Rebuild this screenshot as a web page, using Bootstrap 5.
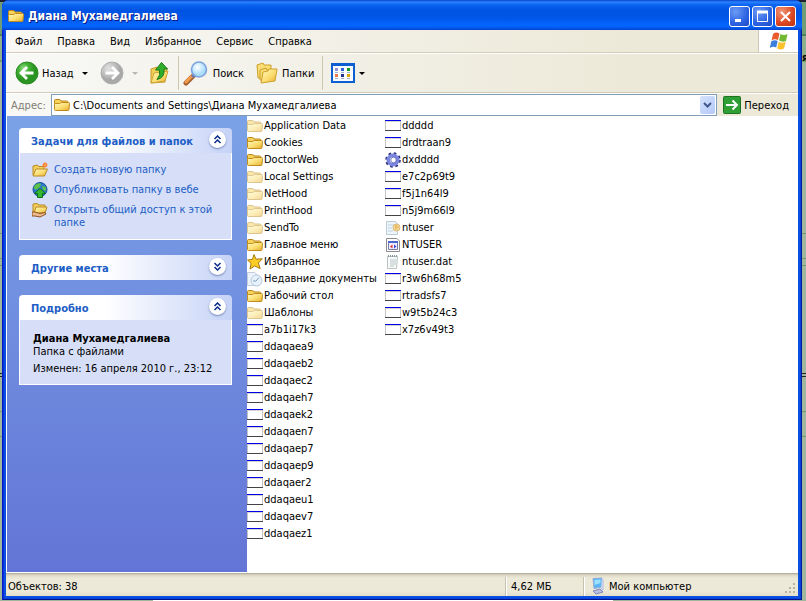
<!DOCTYPE html>
<html lang="ru">
<head>
<meta charset="utf-8">
<meta name="viewport" content="width=device-width, initial-scale=1">
<title>Диана Мухамедгалиева</title>
<link href="https://cdn.jsdelivr.net/npm/bootstrap@5.3.0/dist/css/bootstrap.min.css" rel="stylesheet">
<style>
:root{--face:#ece9d8;--ink:#000;--task:#215dc6}
body{font:11px/13px "DejaVu Sans Condensed","DejaVu Sans",sans-serif;color:var(--ink);
 background:linear-gradient(90deg,transparent 19%,#fff 19% 76%,transparent 76%) bottom/100% 1px no-repeat,
 linear-gradient(transparent 233px,#6f9d70 233px 234px,transparent 234px 258px,#6f9d70 258px 259px,transparent 259px 265px,#6f9d70 265px 266px,transparent 266px 373px,#222 373px 374px,transparent 374px 376px,#222 376px 377px,transparent 377px 411px,#6f9d70 411px 412px,transparent 412px 436px,#6f9d70 436px 437px,transparent 437px),
 linear-gradient(#1c2030 0 2px,#6f9d78 2px 34px,#4c8058 34px 36px,#8fb08c 36px 60px,#6fa06c 60px 62px,#9fb79c 62px)}
button,input,a{font:inherit;color:inherit}
a{text-decoration:none}
a:hover{text-decoration:underline}
button{background:none;border:0;padding:0}
svg{flex:none;display:block}
.desktop{min-height:100vh;padding:0 4px 1px 2px;overflow:hidden}
.edge-text{right:-4px;top:51px;width:4px;height:13px;overflow:hidden;font-weight:700}
.xp-window{background:#0a4fe0;padding:0 4px 4px;border-radius:7px 7px 0 0;
 box-shadow:inset 1px 0 #0019cf,inset -1px 0 #001a9e,inset 0 -1px #00138c,inset 2px 0 #0831d9,inset -2px 0 #0441d8,inset 0 -2px #0441d8}
.title-strip{height:30px;margin:0 -4px;padding:2px 6px 0;border-radius:7px 7px 0 0;color:#fff;
 background:linear-gradient(#0842c8 0,#2b83ff 2px,#0a62f0 5px,#0054e3 10px,#0056e8 18px,#0366ff 25px,#0560f5 27px,#0043cf 30px)}
.title-strip h1{font:bold 12px/16px "DejaVu Sans Condensed","DejaVu Sans",sans-serif;text-shadow:1px 1px #0a1883}
.cap-btns{gap:2px}
.cap-btn{width:21px;height:21px;border:1px solid #fff;border-radius:3px;display:grid;place-items:center;background:radial-gradient(circle at 30% 25%,#6c9bf5,#2c62e2 60%,#1c4bc4)}
.cap-close{background:radial-gradient(circle at 30% 25%,#f0977a,#dd4a24 55%,#b8320e)}
.bars{background:linear-gradient(90deg,#f8f8f6,var(--face) 80%)}
.menu-row{height:23px;border-bottom:1px solid #d0ccb8}
.menu-row nav{padding-left:9px;gap:15px}
.flag-box{width:40px;background:#fff;border-left:1px solid #cdc9b6}
.tool-row{height:40px;border-top:1px solid #fff;border-bottom:1px solid #d0ccb8;padding-left:9px}
.back-btn{gap:3px}
.up-btn{margin:0 6px 0 10px}
.tool-sep{width:1px;height:34px;background:#cbc7b0}
.caret{width:0;height:0;border:3px solid transparent;border-top-color:#000;border-bottom:0}
.addr-row{height:23px;padding:0 9px 0 5px;border-top:1px solid #fff}
.addr-row label{color:#7f7c73;width:40px}
.addr-box{height:22px;border:1px solid #7f9db9;background:#fff;padding:0 1px 0 2px;margin-right:6px}
.addr-box input{border:0;outline:0;padding:0;min-width:0;margin-left:3px;background:none}
.drop-btn{width:15px;height:18px;border-radius:2px;background:linear-gradient(135deg,#d5e1fd,#b4c9f8);display:grid;place-items:center}
.main-area{border:solid #fff;border-width:0 0 1px 1px;background:#fff;min-height:457px}
.task-pane{width:240px;flex:none;padding:12px 15px 12px 12px;gap:15px;background:linear-gradient(#7ba2e7,#6375d6)}
.task-head{height:25px;padding:0 6px 0 12px;border-radius:4px 4px 0 0;color:var(--task);background:linear-gradient(90deg,#fff 40%,#c6d3f7)}
.task-head h2{font:bold 11px/13px "DejaVu Sans Condensed","DejaVu Sans",sans-serif;margin:2px 0 0}
.round-btn{width:17px;height:17px;margin-bottom:2px;border-radius:50%;background:#fff;display:grid;place-items:center;box-shadow:0 1px 2px #7185b9}
.task-body{border:1px solid #fff;border-top:0;background:#d6dff7;padding:9px 8px 10px 12px}
.task-links{gap:4px;color:var(--task)}
.task-links a{gap:6px}
.task-links span{padding-top:1px}
.info-body{min-height:65px;padding-left:13px;white-space:nowrap}
.files{padding-top:1px;width:138px}
.files a{height:17px;gap:1px;white-space:nowrap}
.ghost{opacity:.5}
.status-row{height:23px;background:linear-gradient(#a8a594 0,#dcd8c4 2px,var(--face) 5px,#ece9d8 18px,#e2decb);padding:3px 0 0 2px}
.status-cell{border-left:1px solid #fff;box-shadow:-1px 0 #c5c2b0;height:19px}
.size-cell{width:78px}
.zone-cell{width:200px;gap:2px}
</style>
</head>
<body>
<svg width="0" height="0" class="position-absolute" aria-hidden="true">
<defs>
<linearGradient id="gold" x1="0" y1="0" x2="1" y2="1"><stop stop-color="#fffabf"/><stop offset=".55" stop-color="#fbdd70"/><stop offset="1" stop-color="#e5aa2c"/></linearGradient>
<radialGradient id="green" cx=".35" cy=".3"><stop stop-color="#9be08a"/><stop offset=".5" stop-color="#43b036"/><stop offset="1" stop-color="#2a9422"/></radialGradient>
<radialGradient id="grey" cx=".35" cy=".3"><stop stop-color="#e4e4e4"/><stop offset=".6" stop-color="#c2c2c2"/><stop offset="1" stop-color="#a8a8a8"/></radialGradient>
<radialGradient id="lens" cx=".4" cy=".35"><stop stop-color="#fff"/><stop offset="1" stop-color="#a8dcfa"/></radialGradient>
<symbol id="folder" viewBox="0 0 16 16"><path d="M.5 12V3.500Q.5 2.500 1.500 2.500H5.500Q6.500 2.500 7 4H12.500Q14 4 14 5.500V12Z" fill="#f6d25a" stroke="#b98418"/><path d="M1.500 13.500Q.5 13.500.5 12.500V7.500Q.5 6.500 1.500 6.500H5.500L7.500 5.500H14.500Q15.500 5.500 15.500 6.500L15 12.500Q15 13.500 14 13.500Z" fill="url(#gold)" stroke="#c08c20"/></symbol>
<symbol id="app" viewBox="0 0 16 16"><path d="M.5 3V12M15.500 3V12" stroke="#c4c4c4"/><path d="M1 3.500H15" stroke="#d4d4d4"/><path d="M0 2H16V3H0Z" fill="#0000e8"/><path d="M0 12H16V13H0Z" fill="#444"/></symbol>
<symbol id="up2" viewBox="0 0 9 9"><path d="M1.500 4L4.500 1L7.500 4M1.500 8L4.500 5L7.500 8" fill="none" stroke="#0a2c8c" stroke-width="1.500"/></symbol>
<symbol id="down2" viewBox="0 0 9 9"><path d="M1.500 1L4.500 4L7.500 1M1.500 5L4.500 8L7.500 5" fill="none" stroke="#0a2c8c" stroke-width="1.500"/></symbol>
<symbol id="star" viewBox="0 0 16 16"><path d="M7 .6L9 5.200L15.300 4.800L11.300 9L13.200 14.500L7.700 12L3 15L4.100 9.400L.5 6L5.400 5.400Z" fill="#fbcc24" stroke="#a8780c"/></symbol>
<symbol id="recent" viewBox="0 0 16 16"><path d="M.5 1.500H7.500L11.500 5V14.500H.5Z" fill="#eef3fb" stroke="#c3ccdb"/><circle cx="9.500" cy="9.500" r="5.500" fill="#e6f1fb" stroke="#b3c6dc"/><path d="M9 10L12 6.500M9 10H6" fill="none" stroke="#7f9fc2"/></symbol>
<symbol id="gear" viewBox="0 0 16 16"><circle cx="8" cy="8" r="6.500" fill="none" stroke="#2b3278" stroke-width="2.600" stroke-dasharray="2.500 2.600"/><circle cx="8" cy="8" r="4.800" fill="none" stroke="#7b86e0" stroke-width="3.400"/><circle cx="8.500" cy="8" r="2.800" fill="#fff" stroke="#4a52a8" stroke-width=".8"/></symbol>
<symbol id="inf" viewBox="0 0 16 16"><path d="M1.500 1.500H10.500L12.500 4V14.500H1.500Z" fill="#edf5fa" stroke="#b8ccd8"/><path d="M3 5H9M3 8H7M3 11H8" stroke="#bcd3e2"/><circle cx="11.500" cy="7.500" r="3.500" fill="#f3d79b" stroke="#dcb873"/><path d="M10 4L14 7L10 10" fill="#e8bd66"/></symbol>
<symbol id="ini" viewBox="0 0 16 16"><path d="M1.500 1.500H12L14.500 4V14.500H1.500Z" fill="#fff" stroke="#8c8c8c"/><path d="M3.500 4.500H12.500V12.500H3.500Z" fill="#eef" stroke="#777ca8"/><path d="M3 5H13" stroke="#4a66d0" stroke-width="2"/><path d="M5 9.500L7.500 7.500V11.500Z" fill="#d33"/><path d="M11.500 9.500L9 7.500V11.500Z" fill="#34d"/></symbol>
<symbol id="note" viewBox="0 0 16 16"><path d="M2.500 2.500H12.500L11.500 14.500H2.500Z" fill="#f8faf9" stroke="#b8c2bf"/><path d="M3 2H12" stroke="#8a9a98" stroke-width="2" stroke-dasharray="1 1"/><path d="M5 6H11M5 8H11M5 10H11M5 12H9" stroke="#b7c5cc"/></symbol>
</defs>
</svg>
<div class="desktop d-flex">
<div class="xp-window position-relative flex-grow-1 d-flex flex-column">
<div class="edge-text position-absolute" aria-hidden="true">я</div>
<header class="title-strip d-flex align-items-center">
<svg width="16" height="16"><use href="#folder"/></svg>
<h1 class="mb-0 ms-1 flex-grow-1">Диана Мухамедгалиева</h1>
<div class="cap-btns d-flex ps-2">
<button class="cap-btn" aria-label="Свернуть"><svg width="15" height="15"><path d="M3 11.500H9" stroke="#fff" stroke-width="3"/></svg></button>
<button class="cap-btn" aria-label="Развернуть"><svg width="15" height="15"><path d="M2.500 3V12.500H12.500V3" fill="none" stroke="#fff"/><path d="M2 3H13" stroke="#fff" stroke-width="3"/></svg></button>
<button class="cap-btn cap-close" aria-label="Закрыть"><svg width="15" height="15"><path d="M3 3L12 12M12 3L3 12" stroke="#fff" stroke-width="2"/></svg></button>
</div>
</header>
<div class="bars">
<div class="menu-row d-flex">
<nav class="d-flex align-items-center flex-grow-1">
<button>Файл</button><button>Правка</button><button>Вид</button><button>Избранное</button><button>Сервис</button><button>Справка</button>
</nav>
<div class="flag-box d-flex align-items-center justify-content-center">
<svg width="20" height="20" viewBox="0 0 20 20"><path d="M4 3Q7 .5 10.500 2.500L9 9Q5.500 7.500 2.500 9.500Z" fill="#ea5a2c"/><path d="M11.500 3Q15 5 18.500 3L17 10Q13.500 11.500 10 9.500Z" fill="#74b832"/><path d="M2.200 10.500Q5.500 8.500 8.700 10L7.200 16.500Q4 15 .8 17Z" fill="#3c80dc"/><path d="M9.700 10.700Q13 12.500 16.700 11L15 17.500Q11.500 19.500 8.200 17.500Z" fill="#fbc22e"/></svg>
</div>
</div>
<div class="tool-row d-flex align-items-center">
<button class="back-btn d-flex align-items-center"><svg width="24" height="24"><circle cx="12" cy="12" r="11" fill="url(#green)" stroke="#2b8a25"/><path d="M18.500 12H7M12 6L6 12L12 18" fill="none" stroke="#fff" stroke-width="2.800"/></svg>Назад</button>
<button class="ms-2" aria-label="Список переходов назад"><span class="caret d-block"></span></button>
<button class="ms-2 ps-1 d-flex align-items-center" disabled aria-label="Вперед"><svg width="24" height="24"><circle cx="12" cy="12" r="11" fill="url(#grey)" stroke="#b0b0b0"/><path d="M5.500 12H17M12 6L18 12L12 18" fill="none" stroke="#fff" stroke-width="2.800"/></svg><span class="caret ms-2 opacity-25"></span></button>
<button class="up-btn" aria-label="Вверх"><svg width="24" height="24"><path d="M3 8L9 6L10 8L19 7L17 21L3 22Z" fill="#f2cf55" stroke="#c79a2a"/><path d="M3 22L6 12L20 10L17 20Z" fill="url(#gold)" stroke="#cfa235"/><path d="M7.500 9L13.500 1.500L19.500 8L16 8Q17 17 9 18.500Q13 14 11.500 9Z" fill="#2fae2b" stroke="#187a18"/></svg></button>
<div class="tool-sep"></div>
<button class="d-flex align-items-center gap-1 ms-1"><svg width="26" height="26"><path d="M3 23L11 15" stroke="#a35f2e" stroke-width="5" stroke-linecap="round"/><path d="M3 22L10 15" stroke="#f49a4b" stroke-width="3" stroke-linecap="round"/><path d="M9 17L12 14" stroke="#6a7fc0" stroke-width="3"/><circle cx="16" cy="9.500" r="7.500" fill="url(#lens)" stroke="#7ca2de" stroke-width="1.600"/></svg>Поиск</button>
<button class="back-btn d-flex align-items-center ms-2 ps-1"><svg width="23" height="24"><path d="M1 4L7 2L8 4H15V17H2Z" fill="#f7dd73" stroke="#cf9f2c"/><path d="M4 9L10 7L11 9H17L16 19H4Z" fill="#f7dd73" stroke="#cf9f2c"/><path d="M5 22L7 11L12 10L13 8L21 8L19 20Z" fill="url(#gold)" stroke="#cf9f2c"/></svg>Папки</button>
<div class="tool-sep ms-2"></div>
<button class="d-flex align-items-center ms-2" aria-label="Вид"><svg width="24" height="20"><path d="M1 1H23V19H1Z" fill="#f8fbff" stroke="#0b5fd0" stroke-width="2"/><path d="M0 1.500H24" stroke="#0b5fd0" stroke-width="3"/><g stroke-width="3"><path d="M4 6.500H7" stroke="#8f91d8"/><path d="M10 6.500H13" stroke="#2463da"/><path d="M16 6.500H19" stroke="#159a20"/><path d="M4 12.500H7" stroke="#f0764a"/><path d="M10 12.500H13" stroke="#24368c"/><path d="M16 12.500H19" stroke="#d8a400"/></g><path d="M4 9.500H7M10 9.500H13M16 9.500H19M4 15.500H7M10 15.500H13M16 15.500H19" stroke="#a3afd0"/></svg><span class="caret ms-1"></span></button>
</div>
<div class="addr-row d-flex align-items-center">
<label for="addr">Адрес:</label>
<div class="addr-box d-flex align-items-center flex-grow-1">
<svg width="16" height="16"><use href="#folder"/></svg>
<input id="addr" class="flex-grow-1" type="text" value="C:\Documents and Settings\Диана Мухамедгалиева">
<button class="drop-btn" aria-label="Открыть список адресов"><svg width="9" height="7"><path d="M1 1L4.500 4.500L8 1" fill="none" stroke="#42598c" stroke-width="2"/></svg></button>
</div>
<button class="back-btn d-flex align-items-center"><svg width="18" height="18"><rect x=".5" y=".5" width="17" height="17" rx="1" fill="#2f9e35" stroke="#1c7423"/><path d="M3 9H14M9.500 4.500L14 9L9.500 13.500" fill="none" stroke="#fff" stroke-width="2"/></svg>Переход</button>
</div>
</div>
<main class="main-area d-flex flex-grow-1">
<aside class="task-pane d-flex flex-column">
<section>
<div class="task-head d-flex align-items-center justify-content-between"><h2>Задачи для файлов и папок</h2><button class="round-btn" aria-label="Свернуть задачи"><svg width="9" height="9"><use href="#up2"/></svg></button></div>
<div class="task-body">
<div class="task-links d-flex flex-column">
<a href="#" class="d-flex"><svg width="16" height="16"><path d="M1 13V4L5 3L7 4.500H12V13Z" fill="#f4cf5a" stroke="#b98a26"/><path d="M1 14L4 7H15.500L12.500 14Z" fill="url(#gold)" stroke="#b98a26"/><circle cx="13" cy="3" r="2.300" fill="#f0602a"/><path d="M13 0V6M10 3H16" stroke="#ffb05a"/></svg><span>Создать новую папку</span></a>
<a href="#" class="d-flex"><svg width="16" height="16"><circle cx="8" cy="7.500" r="7" fill="#2a78cc" stroke="#185098"/><path d="M3 3Q7 0 9 2L8 5L4 8L1.500 6ZM10 4L14 5V9L11 8Z" fill="#5cc04a"/><path d="M8 6.500L13.500 11.500H10.500V15.500H5.500V11.500H2.500Z" fill="#35b82e" stroke="#13701a"/></svg><span>Опубликовать папку в вебе</span></a>
<a href="#" class="d-flex"><svg width="16" height="16"><path d="M1 11V2L5 1.500L7 3H13V11Z" fill="#f4cf5a" stroke="#b98a26"/><path d="M2 11L4 5H15L13 11Z" fill="url(#gold)" stroke="#b98a26"/><path d="M0 10H3L8 11.500L13 10.500L14 12L8 15L3 14H0Z" fill="#eeb98a" stroke="#8a5326"/></svg><span>Открыть общий доступ к этой папке</span></a>
</div>
</div>
</section>
<section>
<div class="task-head d-flex align-items-center justify-content-between"><h2>Другие места</h2><button class="round-btn" aria-label="Развернуть другие места"><svg width="9" height="9"><use href="#down2"/></svg></button></div>
</section>
<section>
<div class="task-head d-flex align-items-center justify-content-between"><h2>Подробно</h2><button class="round-btn" aria-label="Свернуть подробно"><svg width="9" height="9"><use href="#up2"/></svg></button></div>
<div class="task-body info-body pt-2 pb-2"><strong class="d-block mt-1">Диана Мухамедгалиева</strong><span class="d-block">Папка с файлами</span><span class="d-block mt-1">Изменен: 16 апреля 2010 г., 23:12</span></div>
</section>
</aside>
<ul class="files list-unstyled mb-0">
<li><a href="#" class="d-flex align-items-center"><svg class="ghost" width="16" height="16"><use href="#folder"/></svg>Application Data</a></li>
<li><a href="#" class="d-flex align-items-center"><svg width="16" height="16"><use href="#folder"/></svg>Cookies</a></li>
<li><a href="#" class="d-flex align-items-center"><svg width="16" height="16"><use href="#folder"/></svg>DoctorWeb</a></li>
<li><a href="#" class="d-flex align-items-center"><svg class="ghost" width="16" height="16"><use href="#folder"/></svg>Local Settings</a></li>
<li><a href="#" class="d-flex align-items-center"><svg class="ghost" width="16" height="16"><use href="#folder"/></svg>NetHood</a></li>
<li><a href="#" class="d-flex align-items-center"><svg class="ghost" width="16" height="16"><use href="#folder"/></svg>PrintHood</a></li>
<li><a href="#" class="d-flex align-items-center"><svg class="ghost" width="16" height="16"><use href="#folder"/></svg>SendTo</a></li>
<li><a href="#" class="d-flex align-items-center"><svg width="16" height="16"><use href="#folder"/></svg>Главное меню</a></li>
<li><a href="#" class="d-flex align-items-center"><svg width="16" height="16"><use href="#star"/></svg>Избранное</a></li>
<li><a href="#" class="d-flex align-items-center"><svg width="16" height="16"><use href="#recent"/></svg>Недавние документы</a></li>
<li><a href="#" class="d-flex align-items-center"><svg width="16" height="16"><use href="#folder"/></svg>Рабочий стол</a></li>
<li><a href="#" class="d-flex align-items-center"><svg class="ghost" width="16" height="16"><use href="#folder"/></svg>Шаблоны</a></li>
<li><a href="#" class="d-flex align-items-center"><svg width="16" height="16"><use href="#app"/></svg>a7b1i17k3</a></li>
<li><a href="#" class="d-flex align-items-center"><svg width="16" height="16"><use href="#app"/></svg>ddaqaea9</a></li>
<li><a href="#" class="d-flex align-items-center"><svg width="16" height="16"><use href="#app"/></svg>ddaqaeb2</a></li>
<li><a href="#" class="d-flex align-items-center"><svg width="16" height="16"><use href="#app"/></svg>ddaqaec2</a></li>
<li><a href="#" class="d-flex align-items-center"><svg width="16" height="16"><use href="#app"/></svg>ddaqaeh7</a></li>
<li><a href="#" class="d-flex align-items-center"><svg width="16" height="16"><use href="#app"/></svg>ddaqaek2</a></li>
<li><a href="#" class="d-flex align-items-center"><svg width="16" height="16"><use href="#app"/></svg>ddaqaen7</a></li>
<li><a href="#" class="d-flex align-items-center"><svg width="16" height="16"><use href="#app"/></svg>ddaqaep7</a></li>
<li><a href="#" class="d-flex align-items-center"><svg width="16" height="16"><use href="#app"/></svg>ddaqaep9</a></li>
<li><a href="#" class="d-flex align-items-center"><svg width="16" height="16"><use href="#app"/></svg>ddaqaer2</a></li>
<li><a href="#" class="d-flex align-items-center"><svg width="16" height="16"><use href="#app"/></svg>ddaqaeu1</a></li>
<li><a href="#" class="d-flex align-items-center"><svg width="16" height="16"><use href="#app"/></svg>ddaqaev7</a></li>
<li><a href="#" class="d-flex align-items-center"><svg width="16" height="16"><use href="#app"/></svg>ddaqaez1</a></li>
</ul>
<ul class="files list-unstyled mb-0">
<li><a href="#" class="d-flex align-items-center"><svg width="16" height="16"><use href="#app"/></svg>ddddd</a></li>
<li><a href="#" class="d-flex align-items-center"><svg width="16" height="16"><use href="#app"/></svg>drdtraan9</a></li>
<li><a href="#" class="d-flex align-items-center"><svg width="16" height="16"><use href="#gear"/></svg>dxdddd</a></li>
<li><a href="#" class="d-flex align-items-center"><svg width="16" height="16"><use href="#app"/></svg>e7c2p69t9</a></li>
<li><a href="#" class="d-flex align-items-center"><svg width="16" height="16"><use href="#app"/></svg>f5j1n64l9</a></li>
<li><a href="#" class="d-flex align-items-center"><svg width="16" height="16"><use href="#app"/></svg>n5j9m66l9</a></li>
<li><a href="#" class="d-flex align-items-center"><svg width="16" height="16"><use href="#inf"/></svg>ntuser</a></li>
<li><a href="#" class="d-flex align-items-center"><svg width="16" height="16"><use href="#ini"/></svg>NTUSER</a></li>
<li><a href="#" class="d-flex align-items-center"><svg width="16" height="16"><use href="#note"/></svg>ntuser.dat</a></li>
<li><a href="#" class="d-flex align-items-center"><svg width="16" height="16"><use href="#app"/></svg>r3w6h68m5</a></li>
<li><a href="#" class="d-flex align-items-center"><svg width="16" height="16"><use href="#app"/></svg>rtradsfs7</a></li>
<li><a href="#" class="d-flex align-items-center"><svg width="16" height="16"><use href="#app"/></svg>w9t5b24c3</a></li>
<li><a href="#" class="d-flex align-items-center"><svg width="16" height="16"><use href="#app"/></svg>x7z6v49t3</a></li>
</ul>
</main>
<footer class="status-row d-flex align-items-center">
<div class="flex-grow-1">Объектов: 38</div>
<div class="status-cell size-cell d-flex align-items-center ps-1">4,62 МБ</div>
<div class="status-cell zone-cell d-flex align-items-center ps-1"><svg width="18" height="18"><path d="M4 1.500L13 1V10L5 11.500Z" fill="#57b7f5" stroke="#94a9d8"/><path d="M5.500 3L11.500 2.500V6L5.500 8Z" fill="#9be0ff"/><path d="M13 1L15 3V13L12 14V10Z" fill="#c9cfe8"/><path d="M4 14L11 12L14 15L7 17Z" fill="#b9bfe0" stroke="#7d86b8"/></svg>Мой компьютер</div>
<svg class="align-self-end" width="14" height="14"><g fill="#b8b4a2"><path d="M9 1h2v2h-2zM5 5h2v2h-2zM9 5h2v2h-2zM1 9h2v2h-2zM5 9h2v2h-2zM9 9h2v2h-2z"/></g></svg>
</footer>
</div>
</div>
<script src="https://cdn.jsdelivr.net/npm/bootstrap@5.3.0/dist/js/bootstrap.bundle.min.js"></script>
</body>
</html>
